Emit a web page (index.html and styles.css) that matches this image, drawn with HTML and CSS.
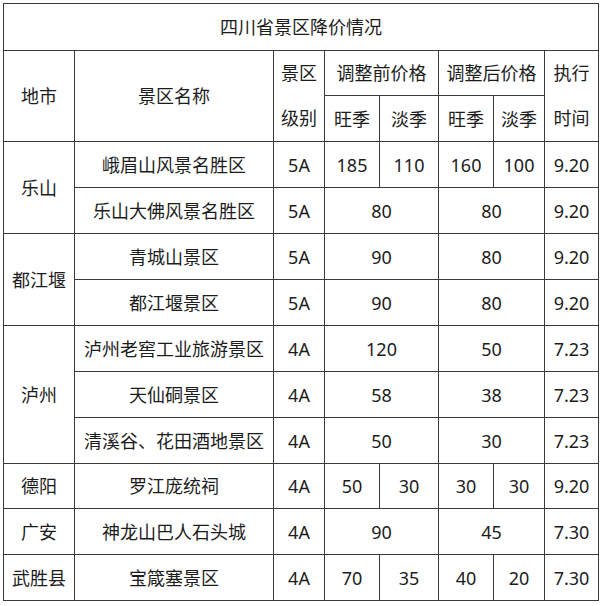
FILE: index.html
```html
<!DOCTYPE html>
<html lang="zh">
<head>
<meta charset="utf-8">
<link rel="stylesheet" href="styles.css">
</head>
<body>
<table class="tbl">
  <colgroup>
    <col class="c1"><col class="c2"><col class="c3"><col class="c4"><col class="c5"><col class="c6"><col class="c7"><col class="c8">
  </colgroup>
  <tr class="r-title"><td colspan="8">四川省景区降价情况</td></tr>
  <tr class="r-h1">
    <td rowspan="2">地市</td>
    <td rowspan="2">景区名称</td>
    <td rowspan="2" class="two">景区<br>级别</td>
    <td colspan="2">调整前价格</td>
    <td colspan="2">调整后价格</td>
    <td rowspan="2" class="two">执行<br>时间</td>
  </tr>
  <tr class="r-h2"><td>旺季</td><td>淡季</td><td>旺季</td><td>淡季</td></tr>
  <tr class="r"><td rowspan="2">乐山</td><td>峨眉山风景名胜区</td><td>5A</td><td>185</td><td>110</td><td>160</td><td>100</td><td>9.20</td></tr>
  <tr class="r"><td>乐山大佛风景名胜区</td><td>5A</td><td colspan="2">80</td><td colspan="2">80</td><td>9.20</td></tr>
  <tr class="r"><td rowspan="2">都江堰</td><td>青城山景区</td><td>5A</td><td colspan="2">90</td><td colspan="2">80</td><td>9.20</td></tr>
  <tr class="r"><td>都江堰景区</td><td>5A</td><td colspan="2">90</td><td colspan="2">80</td><td>9.20</td></tr>
  <tr class="r"><td rowspan="3">泸州</td><td>泸州老窖工业旅游景区</td><td>4A</td><td colspan="2">120</td><td colspan="2">50</td><td>7.23</td></tr>
  <tr class="r"><td>天仙硐景区</td><td>4A</td><td colspan="2">58</td><td colspan="2">38</td><td>7.23</td></tr>
  <tr class="r"><td>清溪谷、花田酒地景区</td><td>4A</td><td colspan="2">50</td><td colspan="2">30</td><td>7.23</td></tr>
  <tr class="r r-short"><td>德阳</td><td>罗江庞统祠</td><td>4A</td><td>50</td><td>30</td><td>30</td><td>30</td><td>9.20</td></tr>
  <tr class="r"><td>广安</td><td>神龙山巴人石头城</td><td>4A</td><td colspan="2">90</td><td colspan="2">45</td><td>7.30</td></tr>
  <tr class="r"><td>武胜县</td><td>宝箴塞景区</td><td>4A</td><td>70</td><td>35</td><td>40</td><td>20</td><td>7.30</td></tr>
</table>
</body>
</html>
```
FILE: styles.css
```css
html, body {
  margin: 0;
  padding: 0;
  background: #ffffff;
}
body {
  padding: 3px 0 0 3px;
}
.tbl {
  border-collapse: collapse;
  table-layout: fixed;
  width: 595px;
  font-family: "Noto Sans", "Noto Sans CJK SC", sans-serif;
  font-size: 18px;
  color: #1c1c1c;
}
.c1 { width: 71px; }
.c2 { width: 199px; }
.c3 { width: 51px; }
.c4 { width: 55px; }
.c5 { width: 59px; }
.c6 { width: 55px; }
.c7 { width: 51px; }
.c8 { width: 54px; }
.tbl td {
  border: 1px solid #3a3a3a;
  text-align: center;
  vertical-align: middle;
  padding: 0;
  line-height: 22px;
  white-space: nowrap;
}
.r-title { height: 47px; }
.r-h1 { height: 45px; }
.r-h2 { height: 46px; }
.r { height: 46px; }
.r-short { height: 45px; }
.tbl td.two { line-height: 45px; }
```
